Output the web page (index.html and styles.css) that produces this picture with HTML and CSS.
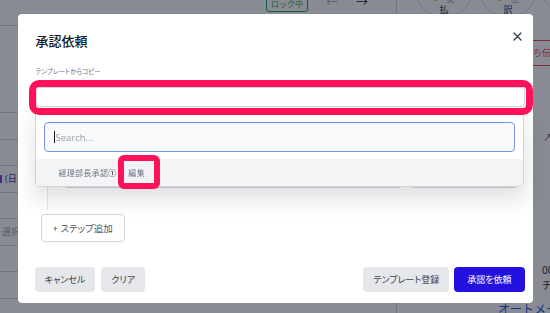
FILE: index.html
```html
<!DOCTYPE html>
<html lang="ja">
<head>
    <meta charset="UTF-8">
    <meta name="viewport" content="width=device-width, initial-scale=1.0">
    <title>承認依頼</title>
    <link rel="stylesheet" href="styles.css">
</head>
<body>

    <!-- background app (dimmed by the modal backdrop) -->
    <div class="app">
        <div class="main">
            <div class="toolbar">
                <span class="lock">ロック中</span>
                <span class="arrow">←</span>
                <span class="arrow dark">→</span>
            </div>
            <div class="summary"></div>
            <div class="row"></div>
            <div class="row"></div>
            <div class="row"><span class="tag"><i class="tag-bar"></i>(日</span></div>
            <div class="row"></div>
            <div class="row"><span class="muted">選択</span></div>
            <div class="row"></div>
            <div class="row"></div>
            <div class="row"></div>
        </div>
        <div class="side">
            <div class="flow">
                <div class="node"><span class="node-top"><i class="dot"></i>支</span><span>払</span></div>
                <div class="node"><span class="node-top"><i class="dot"></i>仕</span><span>訳</span></div>
                <div class="node"></div>
            </div>
            <div class="side-actions">
                <span class="red-btn">持ち伝</span>
            </div>
            <div class="side-link">↗</div>
            <div class="side-bottom">
                <div class="meta">00<br>チ</div>
                <div class="auto">オートメー</div>
            </div>
        </div>
    </div>

    <div class="backdrop">
        <div class="modal">
            <div class="modal-head">
                <h2 class="modal-title">承認依頼</h2>
                <button class="close" aria-label="閉じる">
                    <svg width="9" height="9" viewBox="0 0 9 9"><path d="M1 1L8 8M8 1L1 8" stroke="currentColor" stroke-width="1.4" stroke-linecap="round"/></svg>
                </button>
            </div>

            <p class="label">テンプレートからコピー</p>
            <div class="field">
                <div class="mark"></div>
                <!-- template picker -->
                <div class="dropdown">
                    <div class="search"><i class="caret"></i>Search...</div>
                    <div class="options">
                        <span class="option-name">経理部長承認</span><span class="num">①</span>
                        <span class="edit">編集<i class="edit-mark"></i></span>
                    </div>
                </div>
            </div>

            <div class="steps">
                <div class="step-card wide"></div>
                <div class="step-card narrow"></div>
            </div>

            <button class="add-step">+ ステップ追加</button>

            <div class="modal-foot">
                <button class="btn">キャンセル</button>
                <button class="btn">クリア</button>
                <button class="btn btn-template">テンプレート登録</button>
                <button class="btn btn-primary">承認を依頼</button>
            </div>
        </div>
    </div>

</body>
</html>
```

FILE: styles.css
```css
* { margin: 0; padding: 0; box-sizing: border-box; }
body {
    width: 550px;
    height: 313px;
    overflow: hidden;
    background: #fff;
    font-family: "Noto Sans", "Noto Sans CJK JP", sans-serif;
    color: #1f2937;
}

/* background app */
.app {
    display: grid;
    grid-template-columns: 396px 1fr;
    grid-template-rows: 313px;
    height: 313px;
}
.main { overflow: hidden; }
.toolbar {
    height: 26px;
    border-bottom: 1px solid #d1d5db;
    display: flex;
    align-items: flex-start;
    padding-left: 266px;
}
.lock {
    margin-top: -4px;
    height: 16px;
    padding: 0 4px;
    border: 1px solid #16a34a;
    border-radius: 3px;
    color: #16a34a;
    font-size: 8px;
    line-height: 14px;
}
.arrow {
    margin-left: 18px;
    font-size: 12px;
    line-height: 12px;
    margin-top: -3px;
    color: #9ca3af;
}
.arrow.dark { color: #111827; }
.summary { height: 87px; border-bottom: 1px solid #d1d5db; }
.row {
    height: 26.5px;
    border-bottom: 1px solid #d1d5db;
    display: flex;
    align-items: center;
    font-size: 9px;
}
.tag { color: #3730a3; display: flex; align-items: center; gap: 3px; }
.tag-bar { width: 2px; height: 8px; background: #7c3aed; }
.muted { color: #9ca3af; padding-left: 2px; }

.side {
    border-left: 1px solid #d1d5db;
    display: flex;
    flex-direction: column;
    overflow: hidden;
}
.flow {
    display: flex;
    gap: 4px;
    padding-left: 17px;
    margin-top: -42px;
}
.node {
    flex: 0 0 60px;
    height: 60px;
    border: 1px solid #d1d5db;
    border-radius: 50%;
    display: flex;
    flex-direction: column;
    align-items: center;
    justify-content: flex-end;
    padding-bottom: 2px;
    font-size: 9px;
    line-height: 11px;
}
.node-top { display: flex; align-items: center; gap: 8px; color: #9ca3af; }
.dot { width: 5px; height: 5px; border-radius: 50%; background: #eab308; }
.side-actions { display: flex; justify-content: flex-end; margin-top: 22px; }
.red-btn {
    height: 26px;
    padding: 0 8px;
    border: 1px solid #ef4444;
    border-radius: 3px;
    color: #ef4444;
    font-size: 9px;
    line-height: 24px;
    margin-right: -10px;
}
.side-link { margin-top: 65px; padding-left: 146px; font-size: 9px; color: #374151; }
.side-bottom { margin-top: auto; margin-bottom: -4px; }
.meta { padding-left: 145px; font-size: 10px; line-height: 15px; color: #1e293b; white-space: nowrap; }
.auto { margin-top: 10px; padding-left: 101px; font-size: 12px; line-height: 14px; color: #1d4ed8; white-space: nowrap; }

/* modal */
.backdrop {
    position: fixed;
    inset: 0;
    background: rgba(17, 24, 39, 0.5);
    display: flex;
    justify-content: center;
    align-items: flex-start;
    padding-top: 14px;
}
.modal {
    width: 515px;
    height: 289px;
    background: #fff;
    border-radius: 4px;
    padding: 18px 8px 11px 18px;
    display: flex;
    flex-direction: column;
}
.modal-head {
    display: flex;
    justify-content: space-between;
    height: 18px;
}
.modal-title {
    font-size: 13px;
    line-height: 18px;
    font-weight: 500;
    color: #111827;
}
.close {
    width: 14px;
    height: 14px;
    margin-top: -3px;
    border: none;
    background: none;
    color: #374151;
    display: flex;
    align-items: center;
    justify-content: center;
}
.label {
    margin-top: 17px;
    font-size: 6.5px;
    line-height: 10px;
    color: #6b7280;
    font-feature-settings: "palt";
}
.field {
    position: relative;
    margin-top: 10px;
    height: 20px;
    border: 1px solid #d1d5db;
    border-radius: 3px;
    background: #fff;
}
.mark {
    position: absolute;
    top: -8px;
    left: -8px;
    right: -9px;
    bottom: -9px;
    border: 7px solid #ff1259;
    border-radius: 10px;
    z-index: 2;
}
.dropdown {
    position: absolute;
    top: 100%;
    left: -2px;
    right: 0;
    margin-top: 2px;
    border: 1px solid #d1d5db;
    border-radius: 0 0 4px 4px;
    background: #fff;
    box-shadow: 0 12px 22px rgba(0, 0, 0, 0.13);
    z-index: 1;
}
.search {
    margin: 13px 8px 0;
    height: 30px;
    border: 1px solid #7396ec;
    border-radius: 4px;
    background: #f8f9fb;
    display: flex;
    align-items: center;
    padding-left: 9px;
    font-size: 9.5px;
    color: #9ca3af;
}
.caret { width: 1px; height: 12px; background: #111; margin-right: 1px; }
.options {
    margin-top: 7px;
    height: 27px;
    background: #f3f4f6;
    border-radius: 0 0 3px 3px;
    display: flex;
    align-items: center;
    padding-left: 23px;
    font-size: 8px;
    line-height: 11px;
    color: #6b7280;
}
.option-name { letter-spacing: 0.3px; }
.num { color: #111; }
.edit {
    position: relative;
    margin-left: 12px;
    letter-spacing: 0.5px;
}
.edit-mark {
    position: absolute;
    top: -12px;
    left: -10px;
    right: -15px;
    bottom: -11px;
    border: 6px solid #ff1259;
    border-radius: 6px;
}

.steps {
    margin: 8px 0 0 11px;
    height: 95px;
    border-left: 1px solid #e5e7eb;
    padding: 10px 0 0 16px;
    display: flex;
    gap: 7px;
    align-items: flex-start;
}
.step-card { height: 63px; border: 1px solid #d1d5db; border-radius: 4px; }
.step-card.wide { width: 339px; }
.step-card.narrow { width: 108px; }

.add-step {
    align-self: flex-start;
    margin: 4px 0 0 5px;
    height: 28px;
    padding: 0 11px;
    border: 1px solid #d1d5db;
    border-radius: 4px;
    background: #fff;
    color: #4b5563;
    font-family: inherit;
    font-size: 9.5px;
    font-feature-settings: "palt";
}

.modal-foot {
    margin: 25px 0 0 -1px;
    display: flex;
    gap: 6px;
}
.btn {
    height: 25px;
    padding: 0 10px;
    border: none;
    border-radius: 4px;
    background: #e5e7eb;
    color: #374151;
    font-family: inherit;
    font-size: 9px;
    font-feature-settings: "palt";
}
.btn-template { margin-left: auto; }
.btn-primary { background: #2312df; color: #fff; margin-left: -1px; padding: 0 13px; }
```
